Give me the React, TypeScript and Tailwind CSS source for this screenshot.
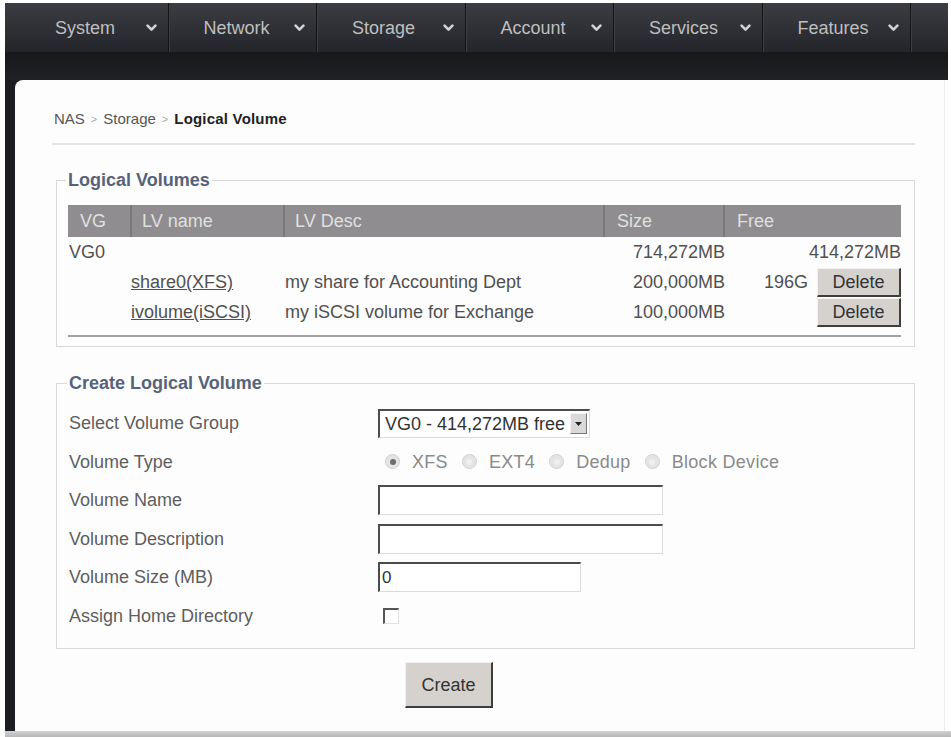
import React from "react";

const navItems = ["System", "Network", "Storage", "Account", "Services", "Features"];

function Chevron() {
  return (
    <svg width="11" height="8" viewBox="0 0 11 8" className="shrink-0">
      <path
        d="M1.6 1.6 L5.5 5.6 L9.4 1.6"
        fill="none"
        stroke="#d2d2d2"
        strokeWidth="2.6"
        strokeLinecap="round"
        strokeLinejoin="round"
      />
    </svg>
  );
}

function Bevel({ children, className }: { children: React.ReactNode; className: string }) {
  return (
    <div
      className={
        "flex items-center justify-center bg-[#d5d2cd] text-[#333] border-t border-l border-t-[#f2f2f2] border-l-[#f2f2f2] border-r-2 border-b-2 border-r-[#3e3e3e] border-b-[#3e3e3e] " +
        className
      }
    >
      {children}
    </div>
  );
}

function Radio({ checked, label }: { checked?: boolean; label: string }) {
  return (
    <div className="flex items-center">
      <span className="w-[15px] h-[15px] rounded-full bg-[#e4e4e4] border border-[#d0d0d0] flex items-center justify-center">
        <span className={checked ? "w-[6px] h-[6px] rounded-full bg-[#6e6e6e]" : "w-[6px] h-[6px] rounded-full bg-[#efefef]"} />
      </span>
      <span className="ml-[12px] mr-[14px] text-[#8a8a8a] tracking-[0.3px]">{label}</span>
    </div>
  );
}

const inset =
  "bg-white border-t-2 border-l-2 border-t-[#4c4c4c] border-l-[#4c4c4c] border-b border-r border-b-[#dcdcdc] border-r-[#dcdcdc]";

function FormRow({ label, children }: { label: string; children?: React.ReactNode }) {
  return (
    <div className="flex items-center h-[38.5px]">
      <div className="w-[309px] text-[#5e5e5e]">{label}</div>
      {children}
    </div>
  );
}

export default function App() {
  return (
    <div className="w-[951px] h-[737px] bg-white overflow-hidden flex flex-col font-['Liberation_Sans',Arial,Helvetica,sans-serif] text-[18px] leading-[22px]">
      <div className="h-[3px] shrink-0" />

      {/* top navigation */}
      <div className="ml-[5px] w-[943px] shrink-0 bg-[#1c1d20]">
        <div className="h-[49px] flex pl-[15px] bg-linear-to-b from-[#3b3d42] to-[#23252a]">
          {navItems.map((n) => (
            <div
              key={n}
              className="w-[148.5px] h-full flex items-center justify-between pl-[35px] pr-[11px] border-r border-r-[#131416] shadow-[1px_0_0_#3c3e43]"
            >
              <span className="text-[#bfbfbf]">{n}</span>
              <Chevron />
            </div>
          ))}
        </div>
        <div className="h-[28px] bg-linear-to-b from-[#17181a] to-[#202124]" />
      </div>

      {/* body */}
      <div className="h-[651px] ml-[5px] flex bg-[linear-gradient(to_right,#1c1d20_30px,#ffffff_30px)]">
        <div className="w-[10px] shrink-0" />
        <div className="w-[930px] bg-[#fdfdfd] rounded-tl-[8px] border-r border-r-[#ececec] pl-[37px] pr-[29px] pt-[30px]">
          {/* breadcrumb */}
          <div className="ml-[2px] flex items-center text-[15px] leading-[18px] text-[#555]">
            <span>NAS</span>
            <span className="mx-[6px] text-[11px] text-[#aaa]">&gt;</span>
            <span>Storage</span>
            <span className="mx-[6px] text-[11px] text-[#aaa]">&gt;</span>
            <span className="font-bold text-[#222] tracking-[0.2px]">Logical Volume</span>
          </div>
          <div className="mt-[15px] h-[2px] bg-[#e6e6e6]" />

          {/* existing volumes */}
          <fieldset className="mt-[25px] ml-[4px] border border-[#d9d9d9] pl-[11px] pr-[13px] pt-[15px] pb-[9px]">
            <legend className="-ml-[2px] px-[2px] font-bold text-[#56637a] leading-[20px]">Logical Volumes</legend>
            <div className="grid grid-cols-[62px_153px_320px_120px_178px] text-[#505050]">
              <div className="h-[32px] bg-[#8f8d8f] text-[#e0e0e0] flex items-center pl-[12px]">VG</div>
              <div className="h-[32px] bg-[#8f8d8f] text-[#e0e0e0] flex items-center pl-[10px] border-l-2 border-l-[#7a787a]">LV name</div>
              <div className="h-[32px] bg-[#8f8d8f] text-[#e0e0e0] flex items-center pl-[10px] border-l-2 border-l-[#7a787a]">LV Desc</div>
              <div className="h-[32px] bg-[#8f8d8f] text-[#e0e0e0] flex items-center pl-[12px] border-l-2 border-l-[#7a787a]">Size</div>
              <div className="h-[32px] bg-[#8f8d8f] text-[#e0e0e0] flex items-center pl-[12px] border-l-2 border-l-[#7a787a]">Free</div>

              <div className="h-[30px] flex items-center pl-[1px]">VG0</div>
              <div className="h-[30px]" />
              <div className="h-[30px]" />
              <div className="h-[30px] flex items-center justify-end -mr-[2px]">714,272MB</div>
              <div className="h-[30px] flex items-center justify-end">414,272MB</div>

              <div className="h-[30px]" />
              <div className="h-[30px] flex items-center pl-[1px]">
                <span className="underline">share0(XFS)</span>
              </div>
              <div className="h-[30px] flex items-center pl-[2px]">my share for Accounting Dept</div>
              <div className="h-[30px] flex items-center justify-end -mr-[2px]">200,000MB</div>
              <div className="h-[30px] flex items-center justify-end gap-[9px]">
                <span>196G</span>
                <Bevel className="w-[84px] h-[29px]">Delete</Bevel>
              </div>

              <div className="h-[30px]" />
              <div className="h-[30px] flex items-center pl-[1px]">
                <span className="underline">ivolume(iSCSI)</span>
              </div>
              <div className="h-[30px] flex items-center pl-[2px]">my iSCSI volume for Exchange</div>
              <div className="h-[30px] flex items-center justify-end -mr-[2px]">100,000MB</div>
              <div className="h-[30px] flex items-center justify-end">
                <Bevel className="w-[84px] h-[29px]">Delete</Bevel>
              </div>
            </div>
            <div className="mt-[8px] h-[2px] bg-[#a2a2a2]" />
          </fieldset>

          {/* new volume form */}
          <fieldset className="mt-[26px] ml-[4px] border border-[#d9d9d9] pl-[12px] pr-[13px] pt-[11px] pb-[13px]">
            <legend className="-ml-[2px] px-[2px] font-bold text-[#56637a] leading-[20px]">Create Logical Volume</legend>
            <FormRow label="Select Volume Group">
              <div className={"w-[212px] h-[29px] flex items-center justify-between pl-[5px] pr-[2px] text-[#333] " + inset}>
                <span>VG0 - 414,272MB free</span>
                <span className="w-[17px] h-[21px] bg-[#d9d9d9] border border-t-[#f4f4f4] border-l-[#f4f4f4] border-r-[#777] border-b-[#777] flex items-center justify-center">
                  <svg width="7" height="4" viewBox="0 0 7 4">
                    <path d="M0 0 L7 0 L3.5 4 Z" fill="#222" />
                  </svg>
                </span>
              </div>
            </FormRow>
            <FormRow label="Volume Type">
              <div className="flex items-center pl-[7px]">
                <Radio checked label="XFS" />
                <Radio label="EXT4" />
                <Radio label="Dedup" />
                <Radio label="Block Device" />
              </div>
            </FormRow>
            <FormRow label="Volume Name">
              <div className={"w-[285px] h-[30px] " + inset} />
            </FormRow>
            <FormRow label="Volume Description">
              <div className={"w-[285px] h-[30px] " + inset} />
            </FormRow>
            <FormRow label="Volume Size (MB)">
              <div className={"w-[203px] h-[30px] flex items-center pl-[2px] text-[17px] text-[#333] " + inset}>0</div>
            </FormRow>
            <FormRow label="Assign Home Directory">
              <div className="ml-[5px] w-[16px] h-[16px] bg-white border-t-2 border-l-2 border-t-[#555] border-l-[#555] border-b border-r border-b-[#e2e2e2] border-r-[#e2e2e2]" />
            </FormRow>
          </fieldset>

          <Bevel className="mt-[13px] ml-[353px] w-[88px] h-[46px]">Create</Bevel>
        </div>
      </div>

      <div className="h-[6px] ml-[5px] bg-linear-to-b from-[#d2d2d2] to-[#b6b6b6]" />
    </div>
  );
}
